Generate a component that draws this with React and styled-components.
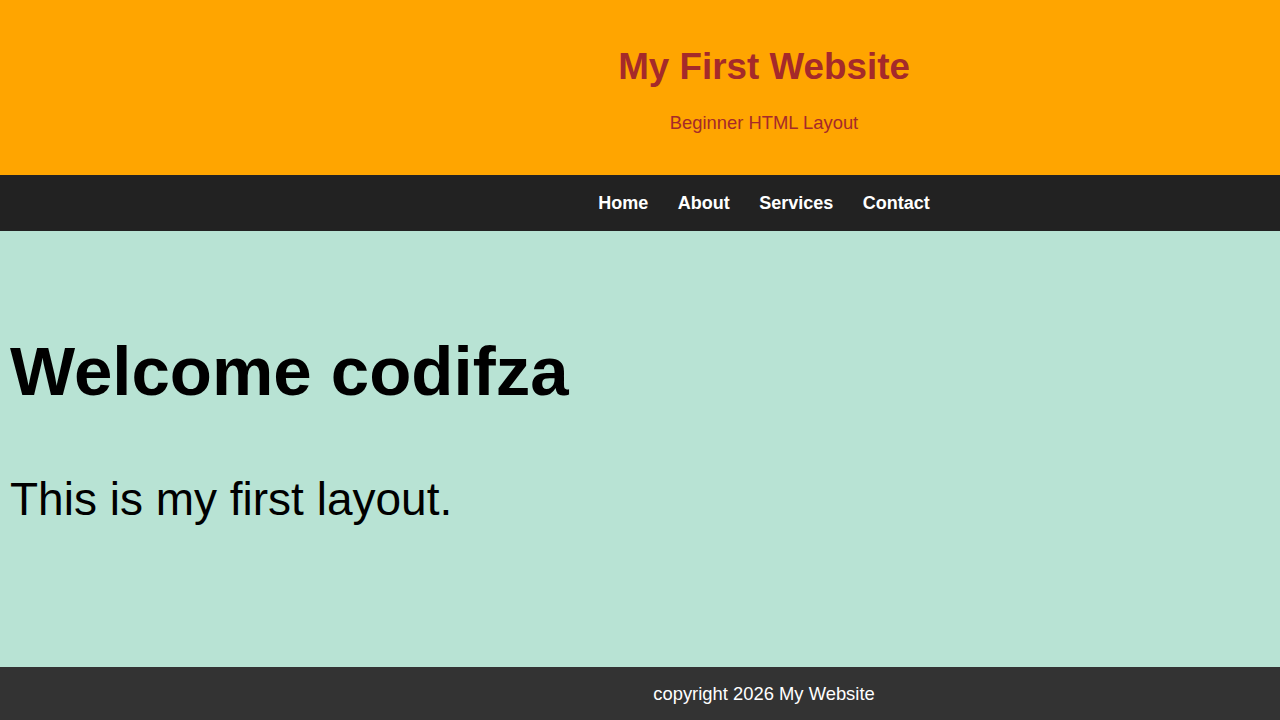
import React from 'react';
import styled, { createGlobalStyle } from 'styled-components';

const GlobalStyle = createGlobalStyle`
    html, body {
        margin: 0;
        padding: 0;
        height: 100%;
    }
    body {
        font-family: "Liberation Sans", Arial, sans-serif;
    }
    #root {
        height: 100%;
    }
`

const Page = styled.div`
    display: flex;
    flex-direction: column;
    height: 100vh;
    overflow: hidden;
`

const Header = styled.header`
    height: 175px;
    flex-shrink: 0;
    background: #FFA500;
    padding: 5px 0 0 248px;
    box-sizing: border-box;

    display: flex;
    flex-direction: column;
    align-items: center;
    justify-content: center;
`

const Title = styled.h1`
    margin: 0;
    font-size: 36.8px;
    font-weight: bold;
    color: #A52A2A;
`

const Tagline = styled.p`
    margin: 24px 0 0;
    font-size: 18.4px;
    color: #A52A2A;
`

const Nav = styled.nav`
    height: 56px;
    flex-shrink: 0;
    background: #222222;
    padding-left: 248px;

    display: flex;
    align-items: center;
    justify-content: center;
    gap: 29.5px;
`

const NavLink = styled.a`
    color: #FFFFFF;
    font-size: 18px;
    font-weight: bold;
    text-decoration: none;
`

const Main = styled.main`
    flex: 1;
    background: #B8E3D4;
    padding: 100px 10px 0;
`

const Welcome = styled.h2`
    margin: 0;
    font-size: 69px;
    line-height: 1.2;
    font-weight: bold;
    color: #000;
`

const Intro = styled.p`
    margin: 58px 0 0;
    font-size: 46px;
    line-height: 1.2;
    color: #000;
`

const Footer = styled.footer`
    height: 53px;
    flex-shrink: 0;
    background: #333333;
    padding-left: 248px;

    display: flex;
    align-items: center;
    justify-content: center;

    color: #FFFFFF;
    font-size: 18.4px;
`

const links = ["Home", "About", "Services", "Contact"]

export default function App() {
    return (
        <Page>
            <GlobalStyle />
            <Header>
                <Title>My First Website</Title>
                <Tagline>Beginner HTML Layout</Tagline>
            </Header>
            <Nav>
                {links.map(l => (
                    <NavLink key={l} href="#">{l}</NavLink>
                ))}
            </Nav>
            <Main>
                <Welcome>Welcome codifza</Welcome>
                <Intro>This is my first layout.</Intro>
            </Main>
            <Footer>copyright 2026 My Website</Footer>
        </Page>
    )
}
